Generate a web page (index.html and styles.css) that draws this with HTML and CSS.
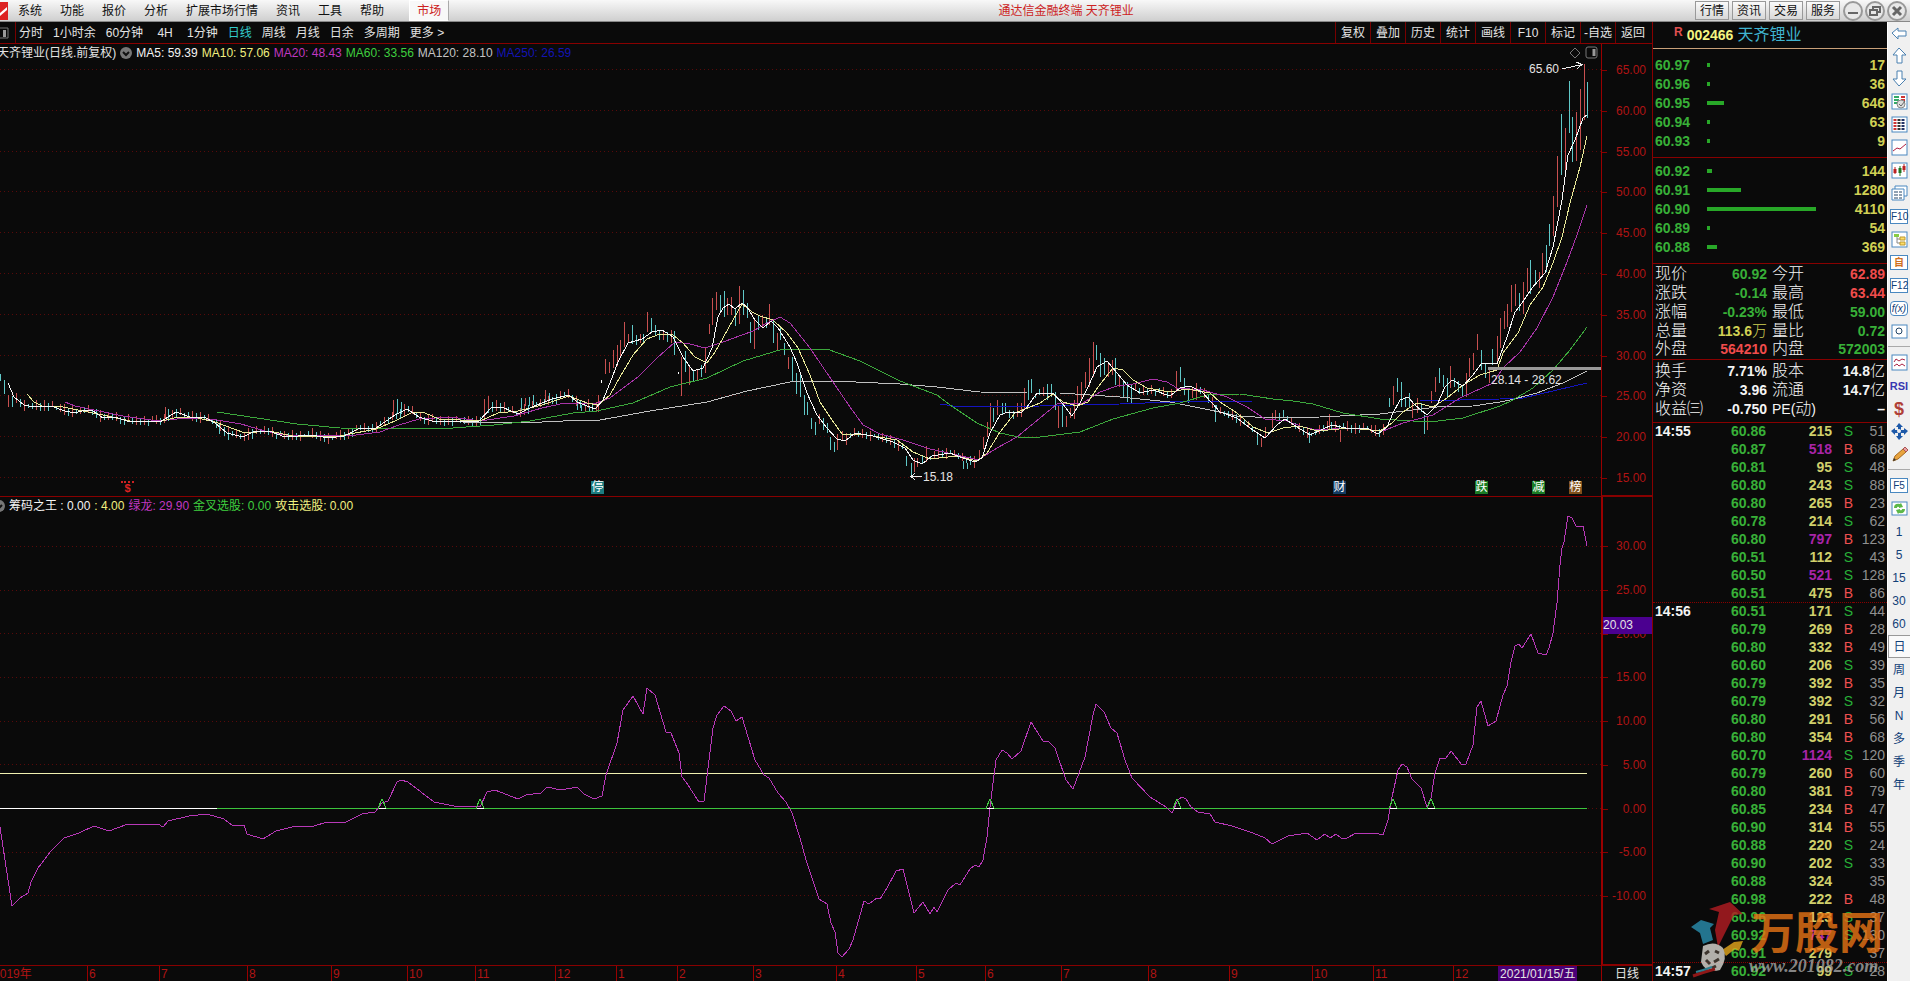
FILE: index.html
```html
<!DOCTYPE html>
<html lang="zh-CN">
<head>
  <meta charset="UTF-8">
  <meta name="viewport" content="width=device-width, initial-scale=1.0">
  <title>通达信金融终端 天齐锂业</title>
  <link rel="stylesheet" href="styles.css">
</head>
<body>
  <div class="app">
    <header class="menu-bar">
      <svg class="app-logo" width="8" height="18" viewBox="0 0 8 18"><rect width="8" height="18" fill="#d22"/><path d="M0 11L7 5V8L0 14Z" fill="#fff"/></svg>
      <nav class="menu">
        <button>系统</button>
        <button>功能</button>
        <button>报价</button>
        <button>分析</button>
        <button>扩展市场行情</button>
        <button>资讯</button>
        <button>工具</button>
        <button>帮助</button>
      </nav>
      <button class="menu-tab">市场</button>
      <div class="title">通达信金融终端 天齐锂业</div>
      <div class="quick">
        <button>行情</button>
        <button>资讯</button>
        <button>交易</button>
        <button>服务</button>
      </div>
      <div class="win-btns">
        <button aria-label="最小化"><svg width="20" height="20" viewBox="0 0 20 20"><circle cx="10" cy="10" r="9"/><path d="M5 12H15" stroke-width="2"/></svg></button>
        <button aria-label="还原"><svg width="20" height="20" viewBox="0 0 20 20"><circle cx="10" cy="10" r="9"/><path d="M8 8V6H15V11H12M5 9H12V14H5Z" stroke-width="2"/></svg></button>
        <button aria-label="关闭"><svg width="20" height="20" viewBox="0 0 20 20"><circle cx="10" cy="10" r="9"/><path d="M6 6L14 14M14 6L6 14" stroke-width="3"/></svg></button>
      </div>
    </header>

    <main class="chart">
      <div class="period-bar">
        <button class="split" aria-label="布局"><svg width="9" height="12" viewBox="0 0 9 12"><path d="M0 1H8V11H0" fill="none" stroke="#777"/><rect x="3" y="3" width="3" height="7" fill="#999"/></svg></button>
        <div class="periods">
          <button>分时</button>
          <button>1小时余</button>
          <button>60分钟</button>
          <button>4H</button>
          <button>1分钟</button>
          <button class="on">日线</button>
          <button>周线</button>
          <button>月线</button>
          <button>日余</button>
          <button>多周期</button>
          <button>更多 &gt;</button>
        </div>
        <div class="tools">
          <button>复权</button>
          <button>叠加</button>
          <button>历史</button>
          <button>统计</button>
          <button>画线</button>
          <button>F10</button>
          <button>标记</button>
          <button>-自选</button>
          <button>返回</button>
        </div>
      </div>

      <section class="pane">
        <svg id="price" class="plot" viewBox="0 44 1601 452" preserveAspectRatio="none"></svg>
        <div class="info">
          <span class="stock-name">天齐锂业(日线.前复权)</span>
          <svg class="drop" width="12" height="12" viewBox="0 0 12 12"><circle cx="6" cy="6" r="6" fill="#777"/><path d="M3 5L6 8L9 5" fill="none" stroke="#111" stroke-width="2"/></svg>
          <span class="c-white">MA5: 59.39</span>
          <span class="c-yellow">MA10: 57.06</span>
          <span class="c-purple">MA20: 48.43</span>
          <span class="c-green">MA60: 33.56</span>
          <span class="c-gray">MA120: 28.10</span>
          <span class="c-blue">MA250: 26.59</span>
        </div>
        <svg class="corner" width="28" height="14" viewBox="0 0 28 14" fill="none" stroke="#777"><path d="M5 2L10 7L5 12L0 7Z"/><rect x="16" y="1" width="11" height="11" rx="2"/><path d="M24 3V10" stroke="#999" stroke-width="3"/></svg>
        <div id="notes"></div>
      </section>
      <div class="axis axis-price">
        <span>65.00</span><span>60.00</span><span>55.00</span><span>50.00</span><span>45.00</span><span>40.00</span><span>35.00</span><span>30.00</span><span>25.00</span><span>20.00</span><span>15.00</span>
      </div>

      <section class="pane pane-sub">
        <svg id="sub" class="plot" viewBox="0 497 1601 468" preserveAspectRatio="none"></svg>
        <div class="info info-sub">
          <svg class="drop" width="12" height="12" viewBox="0 0 12 12"><circle cx="6" cy="6" r="6" fill="#777"/><path d="M3 5L6 8L9 5" fill="none" stroke="#111" stroke-width="2"/></svg>
          <span class="c-white">筹码之王 : 0.00</span>
          <span class="c-yellow">: 4.00</span>
          <span class="c-purple">绿龙: 29.90</span>
          <span class="c-green">金叉选股: 0.00</span>
          <span class="c-yellow">攻击选股: 0.00</span>
        </div>
      </section>
      <div class="axis axis-sub">
        <span>30.00</span><span>25.00</span><span>20.00</span><span>15.00</span><span>10.00</span><span>5.00</span><span>0.00</span><span>-5.00</span><span>-10.00</span>
        <b class="cursor-val">20.03</b>
      </div>

      <div id="dates" class="dates"></div>
      <div class="cycle">日线</div>
    </main>

    <aside class="quote">
      <h1 class="code"><sup>R</sup><span class="num">002466</span><span class="name">天齐锂业</span></h1>
      <table class="depth sell">
        <tr><th>60.97</th><td><i style="width: 2%"></i></td><td>17</td></tr>
        <tr><th>60.96</th><td><i style="width: 2%"></i></td><td>36</td></tr>
        <tr><th>60.95</th><td><i style="width: 14%"></i></td><td>646</td></tr>
        <tr><th>60.94</th><td><i style="width: 2%"></i></td><td>63</td></tr>
        <tr><th>60.93</th><td><i style="width: 2%"></i></td><td>9</td></tr>
      </table>
      <table class="depth buy">
        <tr><th>60.92</th><td><i style="width: 4%"></i></td><td>144</td></tr>
        <tr><th>60.91</th><td><i style="width: 28%"></i></td><td>1280</td></tr>
        <tr><th>60.90</th><td><i style="width: 90%"></i></td><td>4110</td></tr>
        <tr><th>60.89</th><td><i style="width: 2%"></i></td><td>54</td></tr>
        <tr><th>60.88</th><td><i style="width: 8%"></i></td><td>369</td></tr>
      </table>
      <table class="facts">
        <tr><th>现价</th><td class="down">60.92</td><th>今开</th><td class="up">62.89</td></tr>
        <tr><th>涨跌</th><td class="down">-0.14</td><th>最高</th><td class="up">63.44</td></tr>
        <tr><th>涨幅</th><td class="down">-0.23%</td><th>最低</th><td class="down">59.00</td></tr>
        <tr><th>总量</th><td class="vol">113.6<em>万</em></td><th>量比</th><td class="down">0.72</td></tr>
        <tr><th>外盘</th><td class="up">564210</td><th>内盘</th><td class="down">572003</td></tr>
      </table>
      <table class="facts facts-base">
        <tr><th>换手</th><td>7.71%</td><th>股本</th><td>14.8<em>亿</em></td></tr>
        <tr><th>净资</th><td>3.96</td><th>流通</th><td>14.7<em>亿</em></td></tr>
        <tr><th>收益㈢</th><td>-0.750</td><th><b>PE(</b>动<b>)</b></th><td class="dash">–</td></tr>
      </table>
      <table class="ticks"><tbody id="ticks"></tbody></table>
      <div class="mark">
        <svg width="55" height="76" viewBox="0 0 55 76">
          <path d="M3 25L13 18L26 22L22 26L25 38L15 42L12 31Z" fill="#2a8fb0"/>
          <path d="M21 7L42 0L55 12L46 13L30 45L27 28L31 10Z" fill="#b51c22"/>
          <path d="M34 48L46 40L55 39L51 49L47 47L38 54Z" fill="#e5a81c"/>
          <path d="M15 44Q27 38 35 46Q40 56 32 68Q18 72 13 60Z" fill="#dcd9d2"/>
          <path d="M17 52L21 49M27 49L31 51M18 58L22 62M26 60L31 57M24 66L28 64" stroke="#4b4038" stroke-width="3"/>
          <path d="M5 74Q16 70 27 67" fill="none" stroke="#b01c1c" stroke-width="3"/>
          <path d="M8 70Q16 68 24 65" fill="none" stroke="#379ab0" stroke-width="2"/>
        </svg>
        <p><b>万股网</b><i>www.201082.com</i></p>
      </div>
    </aside>

    <nav class="side">
      <button aria-label="后退"><svg viewBox="0 0 17 17"><path class="arr" d="M1 8L7 3V6H15V11H7V14Z"/></svg></button>
      <button aria-label="上"><svg viewBox="0 0 17 17"><path class="arr" d="M8 1L15 8H11V16H6V8H2Z"/></svg></button>
      <button aria-label="下"><svg viewBox="0 0 17 17"><path class="arr" d="M8 16L15 9H11V1H6V9H2Z"/></svg></button>
      <button aria-label="选择"><svg viewBox="0 0 17 17"><rect class="box" x="1" y="1" width="15" height="15"/><path d="M3 4H8M3 7H8M3 10H8" stroke="#3a6" stroke-width="2"/><path d="M10 4H14M10 7H14" stroke="#c33" stroke-width="2"/><circle cx="10" cy="11" r="4" fill="#ddd" stroke="#888"/><path d="M8 11L10 13L14 8" fill="none" stroke="#666"/></svg></button>
      <button aria-label="报价表"><svg viewBox="0 0 17 17"><rect class="box" x="1" y="1" width="15" height="15"/><g stroke-width="3" stroke-dasharray="2 1"><path d="M4 3V14" stroke="#c33"/><path d="M8 3V14" stroke="#333"/><path d="M12 3V14" stroke="#236"/></g></svg></button>
      <button aria-label="分时图"><svg viewBox="0 0 17 17"><rect class="box" x="1" y="1" width="15" height="15"/><path d="M2 12L6 9L9 10L15 5" fill="none" stroke="#b02040"/></svg></button>
      <button aria-label="K线图"><svg viewBox="0 0 17 17"><rect class="box" x="1" y="1" width="15" height="15"/><path d="M4 5V12M13 2V10" stroke="#b22"/><path d="M4 7V11M13 4V8" stroke="#b22" stroke-width="3"/><path d="M9 4V14" stroke="#272"/><path d="M9 6V11" stroke="#272" stroke-width="3"/></svg></button>
      <button aria-label="多窗口"><svg viewBox="0 0 17 17"><path class="box" d="M4 4V1H16V11H13M1 4H13V15H1Z"/><path d="M3 7H7M8 7H11M3 10H7M8 10H11M3 13H7M8 13H11" stroke="#246"/></svg></button>
      <button class="f">F10</button>
      <button aria-label="板块树"><svg viewBox="0 0 17 17"><rect class="box" x="1" y="1" width="15" height="15"/><path d="M6 5V12H9M6 8H9" fill="none" stroke="#888"/><path d="M3 3H8V6H3Z" fill="#8c4"/><path d="M9 6H14V9H9ZM9 11H14V14H9Z" fill="#fd6" stroke="#b93"/></svg></button>
      <button class="f f-self">自</button>
      <button class="f">F12</button>
      <button class="f f-fx">f(x)</button>
      <button aria-label="圆"><svg viewBox="0 0 17 17"><rect class="box" x="1" y="2" width="15" height="13"/><circle cx="8" cy="8" r="3" fill="none" stroke="#246"/></svg></button>
      <hr>
      <button aria-label="指标"><svg viewBox="0 0 17 17"><rect class="box" x="1" y="1" width="15" height="15"/><path d="M3 8L5 5L8 7L11 5L14 6" fill="none" stroke="#a24"/><path d="M3 12L6 10L8 12L11 10L14 12" fill="none" stroke="#a24"/></svg></button>
      <button class="rsi">RSI</button>
      <button class="dollar">$</button>
      <button aria-label="移动"><svg viewBox="0 0 17 17"><path d="M8 0L12 4H10V7H13V5L17 8L13 12V10H10V13H12L8 17L5 13H7V10H4V12L0 8L4 5V7H7V4H5Z" fill="#1c58a8"/><circle cx="8" cy="8" r="2" fill="#f0f0f0"/></svg></button>
      <button aria-label="画线"><svg viewBox="0 0 17 17"><path d="M2 15L4 10L12 3L15 6L7 13Z" fill="#e8a33d" stroke="#a66a20"/><path d="M12 3L14 1L17 4L15 6Z" fill="#e8a0a0" stroke="#a55"/><path d="M2 15L3 12L5 14Z" fill="#333"/></svg></button>
      <hr>
      <button class="f">F5</button>
      <button aria-label="刷新"><svg viewBox="0 0 17 17"><rect class="box" x="1" y="2" width="15" height="13"/><path d="M3 8Q3 3 9 4L10 3L12 7L8 8V7Q6 6 6 8ZM14 9Q14 14 8 13L7 14L5 10L9 9V10Q11 11 11 9Z" fill="#5cb848"/></svg></button>
      <button>1</button>
      <button>5</button>
      <button>15</button>
      <button>30</button>
      <button>60</button>
      <button class="on">日</button>
      <button>周</button>
      <button>月</button>
      <button>N</button>
      <button>多</button>
      <button>季</button>
      <button>年</button>
    </nav>
  </div>
  <script src="chart.js"></script>
</body>
</html>
```
FILE: styles.css
```css
* {
  box-sizing: border-box;
}
body {
  margin: 0;
  background: #0a0a0a;
  font: 12px/16px "Liberation Sans", "Noto Sans CJK SC", sans-serif;
  color: #e4e4e4;
}
button {
  margin: 0;
  padding: 0;
  border: 0;
  background: none;
  font: inherit;
  color: inherit;
  white-space: nowrap;
}
table {
  width: 100%;
  border-collapse: collapse;
}
th, td {
  padding: 0;
}
.app {
  display: grid;
  grid-template-columns: minmax(0, 1fr) 235px 23px;
  grid-template-rows: 22px minmax(0, 1fr);
  height: 100vh;
  overflow: hidden;
}

/* menu */
.menu-bar {
  grid-column: 1 / -1;
  display: flex;
  align-items: center;
  padding-right: 3px;
  background: linear-gradient(#f8f8f8, #cfcfcf);
  border-bottom: 1px solid #888;
  color: #111;
}
.menu {
  display: flex;
  gap: 18px;
  padding: 0 25px 0 10px;
}
.menu-tab {
  height: 21px;
  padding: 0 7px;
  background: #f8f8f8;
  border: 1px solid #fff;
  border-right-color: #aaa;
  color: #c22;
}
.title {
  flex: 1;
  padding-right: 12px;
  text-align: center;
  color: #c22;
}
.quick {
  display: flex;
  gap: 3px;
  padding-right: 3px;
}
.quick button {
  width: 34px;
  height: 19px;
  border: 1px solid #999;
  background: linear-gradient(#fafafa, #d8d8d8);
}
.win-btns {
  display: flex;
  gap: 2px;
}
.win-btns button {
  height: 20px;
}
.win-btns svg {
  fill: none;
  stroke: #666;
}
.win-btns circle {
  fill: #e8e8e8;
  stroke: #999;
  stroke-width: 2;
}

/* chart */
.chart {
  display: grid;
  grid-template-columns: minmax(0, 1fr) 51px;
  grid-template-rows: 22px minmax(0, 453fr) minmax(0, 469fr) 15px;
}
.period-bar {
  grid-column: 1 / -1;
  display: flex;
  align-items: stretch;
  border-bottom: 1px solid #800;
}
.split {
  width: 15px;
  text-align: left;
}
.split svg {
  display: block;
}
.periods {
  flex: 1;
  display: flex;
  gap: 10px;
  padding-left: 3px;
  border-left: 1px solid #700;
}
.periods button {
  min-width: 24px;
}
.periods .on {
  color: #3cc;
}
.tools {
  display: flex;
  padding-right: 2px;
}
.tools button {
  width: 35px;
  border-left: 1px solid #700;
}
.pane {
  position: relative;
  overflow: hidden;
  border-bottom: 1px solid #800;
}
.plot {
  display: block;
  position: absolute;
  width: 100%;
  height: 100%;
  shape-rendering: crispEdges;
}
.info {
  position: relative;
  display: flex;
  align-items: center;
  gap: 4px;
  height: 17px;
}
.info .stock-name {
  margin-left: -3px;
}
.info-sub .drop {
  margin-left: -7px;
}
.c-white { color: #f4f4f4; }
.c-yellow { color: #f0f080; }
.c-purple { color: #c038c0; }
.c-green { color: #3fcf3f; }
.c-gray { color: #c4c4c4; }
.c-blue { color: #1414b4; }
.corner {
  position: absolute;
  top: 2px;
  right: 3px;
}
.note {
  position: absolute;
  transform: translateY(-50%);
}
.badge {
  position: absolute;
  bottom: 2px;
  width: 13px;
  height: 13px;
  margin-left: -6px;
  line-height: 13px;
  text-align: center;
  color: #fff;
}
.b-teal { background: #1d7c80; }
.b-blue { background: #143c64; }
.b-green { background: #1a7c24; }
.b-brown { background: #80501a; }
.b-red {
  border-top: 2px dotted #c22;
  line-height: 11px;
  font-size: 11px;
  font-weight: bold;
  color: #d22;
}
.axis {
  position: relative;
  display: flex;
  flex-direction: column;
  justify-content: space-between;
  padding-right: 6px;
  border-left: 1px solid #900;
  border-bottom: 2px solid #800;
  text-align: right;
  color: #b01414;
}
.axis span {
  position: relative;
}
.axis span::before {
  content: '';
  position: absolute;
  left: 0;
  top: 8px;
  width: 5px;
  height: 1px;
  background: #800;
}
.axis-price {
  padding-top: 18px;
  padding-bottom: 9px;
}
.axis-sub {
  padding-top: 41px;
  padding-bottom: 60px;
  border-left-width: 2px;
}
.cursor-val {
  position: absolute;
  left: 0;
  right: 0;
  top: 120px;
  height: 17px;
  background: #4b0090;
  color: #e4e4e4;
  font-weight: normal;
  text-align: left;
}
.dates {
  position: relative;
  overflow: hidden;
  color: #b01414;
}
.dates span {
  position: absolute;
  padding-left: 1px;
  border-left: 1px solid #900;
}
.dates .today {
  padding: 0 2px;
  border: 0;
  background: #4b0078;
  color: #e4e4e4;
}
.cycle {
  border-left: 1px solid #900;
  text-align: center;
}

/* quote */
.quote {
  position: relative;
  overflow: hidden;
  border-left: 1px solid #800;
  font-size: 14px;
}
.code {
  display: flex;
  gap: 4px;
  height: 27px;
  margin: 0;
  padding-left: 21px;
  border-bottom: 1px solid #c8a078;
  font-size: 14px;
  line-height: 26px;
}
.code sup {
  font-size: 12px;
  line-height: 20px;
  color: #e05050;
}
.code .num {
  color: #f4f480;
}
.code .name {
  font-size: 16px;
  font-weight: normal;
  color: #40b4d0;
}
.depth tr, .facts tr {
  height: 19px;
}
.depth th {
  width: 54px;
  padding-left: 2px;
  text-align: left;
  color: #38b038;
}
.depth td {
  text-align: right;
  font-weight: bold;
  color: #d0d054;
}
.depth td:nth-child(2) {
  width: 121px;
}
.depth td:last-child,
.facts td:last-child,
.ticks td:last-child {
  padding-right: 2px;
}
.depth i {
  display: block;
  height: 4px;
  min-width: 3px;
  background: #28a828;
}
.sell, .buy {
  display: block;
  border-bottom: 1px solid #800;
}
.sell {
  padding: 6px 0 7px;
}
.buy {
  padding: 3px 0 7px;
}
.sell tbody, .buy tbody {
  display: table;
  width: 100%;
  table-layout: fixed;
}
.facts {
  table-layout: fixed;
  border-bottom: 1px solid #800;
}
.facts th {
  width: 54px;
  padding-left: 2px;
  text-align: left;
  font-size: 16px;
  font-weight: 300;
  white-space: nowrap;
  color: #f4f4f4;
}
.facts th b {
  font-size: 14px;
}
.facts td {
  text-align: right;
  font-weight: bold;
  color: #f4f4f4;
}
.facts td:nth-child(2) {
  padding-right: 3px;
}
.facts em {
  font-size: 15px;
  font-style: normal;
  font-weight: 300;
}
.facts .up { color: #f04c4c; }
.facts .down { color: #38b038; }
.facts .vol { color: #d0d054; }
.facts .dash { padding-right: 12px; }
.facts-base {
  margin-top: 2px;
  border-bottom: 0;
}
.ticks {
  margin-top: 3px;
  border-top: 1px solid #800;
  table-layout: fixed;
}
.ticks tr {
  height: 18px;
}
.ticks .minute {
  border-top: 1px dotted #800;
}
.ticks th {
  width: 54px;
  padding-left: 2px;
  text-align: left;
  color: #f4f4f4;
}
.ticks td {
  text-align: right;
  color: #909090;
}
.ticks td:nth-child(2) {
  width: 59px;
  font-weight: bold;
  color: #38b038;
}
.ticks td:nth-child(3) {
  width: 66px;
  font-weight: bold;
  color: #d0d06c;
}
.ticks td:nth-child(4) {
  width: 21px;
}
.ticks td:nth-child(3).big { color: #a824a8; }
.ticks .s { color: #28b038; }
.ticks .b { color: #f05050; }
.mark {
  position: absolute;
  left: 35px;
  right: 0;
  bottom: 3px;
  display: flex;
  opacity: .8;
}
.mark p {
  margin: 10px 0 0;
}
.mark b {
  display: block;
  margin-left: 8px;
  font-size: 44px;
  line-height: 44px;
  color: #e87414;
}
.mark i {
  display: block;
  padding-left: 6px;
  font: italic bold 18px/20px "Liberation Serif", serif;
  color: #a4a4a4;
}
.mark svg {
  flex: none;
}

/* side toolbar */
.side {
  display: flex;
  flex-direction: column;
  background: #f0f0f0;
  border-left: 1px solid #fff;
  color: #124078;
}
.side button {
  flex: none;
  height: 23px;
  text-align: center;
}
.side button:first-child {
  height: 22px;
}
.side svg {
  display: block;
  width: 17px;
  height: 17px;
  margin: 0 auto;
}
.side hr {
  width: 100%;
  margin: 3px 0 4px;
  border: 0;
  border-top: 1px solid #aaa;
}
.side .arr {
  fill: #fff;
  stroke: #4a80b0;
}
.side .box {
  fill: #fff;
  stroke: #4a88c0;
}
.side .f {
  width: 18px;
  height: 15px;
  margin: 4px auto;
  border: 1px solid #4a88c0;
  background: #fff;
  font-size: 10px;
  line-height: 13px;
}
.side .f-self {
  font-weight: bold;
  color: #d07020;
}
.side .f-fx {
  border-radius: 4px;
  font-style: italic;
}
.side .rsi {
  font-size: 11px;
  font-weight: bold;
  color: #3838b0;
}
.side .dollar {
  font-size: 18px;
  font-weight: bold;
  color: #b04038;
}
.side .on {
  border: 1px solid #999;
  border-right: 0;
  background: #fafafa;
}
```
FILE: chart.js
```js
var ma5 = [8,383,14,397,24,405,34,407,51,406,65,411,75,413,85,410,93,411,103,418,115,417,130,422,146,421,160,422,176,412,190,417,206,418,215,423,227,433,243,437,253,432,269,431,285,437,312,435,328,438,344,436,360,428,376,428,395,415,407,409,419,417,435,422,455,421,478,422,492,407,502,407,518,414,532,407,552,399,569,395,577,402,595,409,603,400,610,383,618,362,628,343,642,339,652,332,662,330,673,337,683,357,693,371,703,368,712,348,718,317,723,308,729,304,735,309,742,303,747,307,755,320,763,328,771,321,778,328,790,347,797,363,807,393,817,415,827,428,837,439,845,441,855,433,873,436,893,442,905,448,913,460,922,464,932,456,950,453,960,457,975,462,982,458,990,433,1000,415,1008,412,1022,412,1027,407,1037,393,1053,393,1062,403,1072,416,1080,403,1088,387,1097,367,1107,361,1117,373,1127,385,1140,393,1153,390,1170,396,1180,388,1190,386,1202,392,1212,403,1220,412,1237,418,1250,428,1265,438,1277,425,1285,419,1297,427,1310,435,1332,425,1350,429,1367,428,1378,434,1387,427,1393,413,1400,400,1408,397,1415,405,1427,415,1437,405,1445,387,1452,380,1463,386,1473,375,1482,363,1497,364,1507,337,1515,312,1522,303,1532,288,1545,273,1553,247,1562,200,1568,155,1575,140,1583,118,1587,115];
var ma10 = [27,394,34,402,42,406,63,407,83,411,103,415,130,421,158,422,178,417,198,418,215,422,245,433,269,431,293,436,340,436,376,429,395,421,413,412,425,413,439,419,480,421,498,413,518,411,542,405,569,396,587,403,598,405,610,395,620,377,633,355,647,339,660,334,673,335,683,343,695,357,707,363,715,352,723,338,733,320,742,304,752,312,760,316,773,320,787,333,798,348,810,375,820,402,832,420,842,434,867,435,897,440,913,452,930,459,957,456,977,461,987,453,1000,432,1015,413,1040,403,1053,394,1063,402,1077,406,1088,402,1098,387,1113,368,1123,370,1133,380,1147,388,1170,392,1187,389,1210,393,1220,402,1237,413,1253,427,1268,433,1283,428,1300,426,1317,431,1350,428,1380,431,1392,423,1403,412,1417,403,1433,407,1447,398,1463,385,1480,375,1497,370,1503,353,1518,333,1530,305,1543,287,1553,263,1562,237,1570,203,1580,167,1587,136];
var ma20 = [65,402,75,406,99,411,123,416,158,421,186,418,217,420,241,424,265,431,285,435,348,436,380,432,399,425,419,419,451,417,480,421,514,416,542,408,565,403,597,403,610,398,638,377,657,358,675,342,690,344,705,348,723,342,753,331,767,323,780,317,790,323,810,348,833,382,850,407,863,425,880,434,903,440,930,449,953,454,978,460,997,448,1017,437,1040,418,1057,404,1083,403,1100,392,1117,386,1133,384,1153,379,1167,382,1177,388,1203,390,1227,397,1247,407,1265,419,1287,421,1303,427,1317,430,1347,428,1383,431,1403,423,1433,415,1460,398,1493,383,1503,368,1520,352,1537,328,1553,297,1567,262,1577,235,1587,205];
var ma60 = [217,412,257,418,297,424,340,428,439,429,494,425,530,421,573,413,597,411,633,403,670,387,707,378,743,361,783,349,827,349,860,361,900,381,937,395,953,407,977,423,1000,433,1023,438,1040,437,1080,432,1113,419,1153,408,1180,403,1207,395,1240,394,1273,399,1293,401,1313,404,1343,413,1380,419,1430,422,1463,418,1500,406,1513,400,1533,388,1553,370,1570,350,1587,327];
var ma120 = [463,422,542,422,585,420,600,420,650,411,707,402,747,391,790,382,833,381,900,384,937,387,980,392,1027,393,1060,393,1120,397,1170,402,1210,410,1237,416,1273,418,1320,417,1380,414,1437,407,1473,406,1500,402,1510,400,1537,393,1563,383,1587,371];
var ma250 = [940,404,960,407,1040,406,1120,404,1170,402,1253,401,1420,401,1500,399,1523,398,1557,390,1587,383];
var dragon = [0,827,5,860,12,906,20,898,28,893,31,882,38,868,51,851,64,838,79,833,94,826,109,831,128,824,158,824,163,827,168,821,189,816,207,814,224,819,233,826,244,825,247,834,263,839,276,831,296,826,314,826,327,822,344,823,362,814,375,812,382,803,388,801,397,782,401,780,408,782,434,802,454,806,480,807,487,792,495,790,518,799,526,795,541,793,547,787,561,790,577,787,584,794,594,799,602,796,606,775,617,743,623,710,633,696,643,714,647,688,655,695,666,732,671,733,679,753,682,777,686,782,699,802,704,801,709,760,713,728,717,715,724,706,731,711,736,721,742,717,755,760,764,775,769,778,778,793,786,802,792,813,800,838,806,860,819,899,827,904,831,923,835,932,838,953,842,957,849,949,853,940,864,901,869,904,877,898,880,899,887,888,896,871,903,869,914,913,923,902,930,914,934,907,937,912,948,890,956,883,960,885,970,869,975,865,979,867,983,860,987,837,990,807,996,760,1002,750,1007,753,1012,759,1021,751,1031,722,1043,741,1048,741,1055,748,1066,780,1073,789,1085,757,1093,715,1096,704,1104,712,1111,728,1117,733,1125,760,1132,778,1150,797,1166,807,1172,813,1178,800,1182,797,1186,799,1191,807,1198,812,1210,814,1215,822,1232,826,1253,833,1265,838,1272,844,1288,836,1307,833,1317,840,1325,834,1330,838,1336,834,1341,838,1347,838,1356,833,1375,833,1383,835,1388,820,1392,797,1398,770,1402,764,1407,767,1412,779,1421,788,1427,807,1431,798,1435,773,1440,758,1446,758,1451,751,1462,765,1466,764,1473,745,1477,707,1481,701,1488,726,1496,721,1503,695,1507,686,1511,662,1515,646,1519,644,1522,648,1531,634,1538,653,1546,655,1549,648,1553,633,1557,603,1560,565,1562,548,1564,542,1568,516,1572,518,1576,526,1583,526,1587,546];

// x, high, low, 1 = up / 0 = down
var bars = [0,374,381,0,4,380,394,0,8,395,407,1,12,396,407,0,165,407,418,1,168,409,416,0,219,424,434,0,228,432,440,0,393,400,416,1,397,399,413,0,401,402,414,0,484,399,412,1,488,396,409,1,492,402,412,0,521,398,410,0,525,398,406,1,529,397,406,0,533,395,405,0,545,390,402,1,549,393,400,0,577,399,410,0,581,405,411,0,585,406,411,1,589,406,411,0,598,395,412,1,
605,359,374,1,609,362,373,1,613,350,368,1,617,345,366,1,620,340,357,1,624,322,347,1,628,334,342,1,632,325,344,0,636,335,345,0,640,334,343,1,643,334,342,0,647,312,332,1,651,318,332,0,655,325,335,0,659,330,340,0,663,330,340,1,667,332,342,0,671,330,343,1,674,331,355,0,681,357,396,1,685,351,372,0,689,367,385,1,693,370,381,0,697,370,380,1,701,365,377,0,705,348,373,1,709,324,334,1,712,298,325,1,716,292,310,1,720,295,313,0,724,291,317,0,727,298,315,1,731,297,315,1,735,308,326,0,739,286,324,1,743,290,315,0,747,303,318,0,750,322,343,0,754,320,349,1,758,315,330,0,762,315,328,1,766,317,328,0,769,304,325,1,773,320,343,0,777,333,350,1,780,328,340,0,784,343,355,0,788,357,369,1,792,357,382,0,796,373,394,0,800,375,397,0,804,395,415,0,807,402,415,0,811,418,429,0,815,422,435,0,819,414,424,1,823,418,430,0,827,423,433,0,830,437,450,0,834,442,452,0,837,434,450,1,842,431,441,1,
906,456,466,0,911,463,477,0,914,458,472,1,917,458,467,1,922,455,463,0,926,446,462,1,963,461,469,0,967,463,469,0,979,450,460,1,983,437,449,1,987,422,437,1,990,403,430,1,993,408,422,0,997,400,415,1,1002,403,415,0,1005,403,412,0,1009,410,418,0,1013,411,419,0,1017,403,417,1,1021,403,417,1,1024,388,410,1,1028,380,400,0,1031,379,393,0,1047,384,400,0,1051,384,397,0,1055,392,410,0,1058,405,428,1,1062,403,427,0,1066,416,427,1,1070,408,418,1,1074,400,419,1,1077,386,405,1,1081,382,400,1,1085,372,388,1,1089,358,387,1,1093,342,377,1,1096,345,360,0,1100,353,377,0,1104,358,375,0,1108,363,377,1,1112,360,375,1,1115,358,385,0,1119,377,387,1,1123,382,397,0,1127,382,402,0,1131,385,403,0,
1176,371,392,1,1180,367,382,0,1184,378,395,0,1188,388,403,0,1192,387,398,1,1196,383,400,1,1215,405,422,0,1257,434,445,0,1261,438,447,1,1265,427,438,1,1272,413,428,1,1275,410,420,1,1279,413,420,0,1283,410,418,0,1309,432,443,0,1329,414,430,1,1340,430,442,1,1389,398,407,0,1393,386,405,1,1397,378,392,0,1401,382,407,0,1405,397,407,0,1409,393,407,0,1412,403,418,1,1417,398,413,1,1421,403,412,0,1424,415,434,0,1427,417,430,1,1431,391,403,1,1435,377,392,1,1439,368,383,0,1443,375,387,0,1447,378,397,0,1450,366,388,1,1454,378,387,0,1458,381,392,0,1462,385,397,0,1466,373,397,1,1469,358,377,1,1473,353,370,1,1477,334,350,1,1481,350,370,0,1485,363,378,0,1489,367,383,1,1492,349,365,0,1497,336,363,1,1500,318,348,1,1504,311,329,1,1507,304,327,1,1511,285,312,1,1515,284,306,1,1519,293,311,0,1523,282,314,1,1527,268,292,1,1530,260,294,0,1535,270,285,0,1539,272,288,1,1542,253,275,1,1546,245,272,0,1549,224,246,0,1553,196,236,1,1557,156,207,1,1561,114,175,0,1565,128,174,1,1569,81,133,0,1572,117,162,0,1576,112,161,1,1580,89,150,1,1584,64,120,1,1587,82,118,0];

// quiet stretches, the bars hug the MA5 line
var quiet = [[16,596],[846,903],[930,976],[1035,1044],[1135,1173],[1200,1255],[1287,1386]];

function valueAt(line, x) {
  for (var i = 2; i < line.length; i += 2) {
    if (x <= line[i]) {
      var t = (x - line[i - 2]) / (line[i] - line[i - 2]);
      return line[i - 1] + t * (line[i + 1] - line[i - 1]);
    }
  }
  return line[line.length - 1];
}
function bar(x, y1, y2, up) {
  return '<path d="M' + (x + 0.5) + ' ' + y1 + 'V' + y2 + '" stroke="' + (up ? '#c85050' : '#60c8c8') + '"/>';
}
function line(points, color) {
  return '<polyline points="' + points.join(' ') + '" fill="none" stroke="' + color + '"/>';
}
function grid(from, step, count) {
  var str = '';
  for (var i = 0; i < count; i++) {
    var y = Math.round(from + step * i) + 0.5;
    str += '<path d="M0 ' + y + 'H1601" stroke="#580a0a" stroke-dasharray="1 3"/>';
  }
  return str;
}

function drawPrice() {
  var str = grid(69.2, 40.76, 11);
  for (var q = 0; q < quiet.length; q++) {
    for (var x = quiet[q][0]; x <= quiet[q][1]; x += 4) {
      var n = (x * 37 % 23) / 23;
      var m = (x * 53 % 19) / 19;
      var y = Math.round(valueAt(ma5, x));
      str += bar(x, y - 2 - Math.round(n * 5), y + 1 + Math.round(m * 5), n > 0.5);
    }
  }
  for (var i = 0; i < bars.length; i += 4) {
    str += bar(bars[i], bars[i + 1], bars[i + 2], bars[i + 3]);
  }
  str += '<path d="M601.5 380V383M678.5 372V374" stroke="#fff"/>';
  str += line(ma250, '#1414c0') + line(ma120, '#c0c0c0') + line(ma60, '#3ca83c');
  str += line(ma20, '#a834a8') + line(ma10, '#e8e898') + line(ma5, '#f8f8f8');
  str += '<path d="M1488 368.5H1601" stroke="#999" stroke-width="3"/>';
  str += '<path d="M1562 69L1582 64.5M1576 62L1582 64.5L1577 69M911 476.5H922M915 473L911 476.5L915 480" fill="none" stroke="#eee"/>';
  document.getElementById('price').innerHTML = str;
}

function drawSub() {
  var str = grid(546, 43.65, 9);
  str += '<path d="M0 773.5H1587" stroke="#f0f0b0"/>';
  str += '<path d="M0 808.5H217" stroke="#fff"/><path d="M217 808.5H1587" stroke="#3cc43c"/>';
  str += line(dragon, '#b838b8');
  [382, 480, 990, 1177, 1393, 1431].forEach(function (x) {
    str += '<path d="M' + (x - 4) + ' 808L' + x + ' 799L' + (x + 4) + ' 808" fill="none" stroke="#4c4"/>';
    str += '<path d="M' + (x - 3) + ' 808.5H' + (x + 4) + '" stroke="#fff"/>';
  });
  document.getElementById('sub').innerHTML = str;
}

function left(x) {
  return 'left:' + (x / 16.01).toFixed(2) + '%';
}
function drawNotes() {
  var notes = [[1529, 69, '65.60'], [923, 477, '15.18'], [1491, 380, '28.14 - 28.62']];
  var badges = [[127, 'red', '$'], [597, 'teal', '停'], [1339, 'blue', '财'], [1481, 'green', '跌'], [1538, 'green', '减'], [1575, 'brown', '榜']];
  var str = '';
  notes.forEach(function (n) {
    str += '<span class="note" style="' + left(n[0]) + ';top:' + ((n[1] - 44) / 4.52).toFixed(2) + '%">' + n[2] + '</span>';
  });
  badges.forEach(function (b) {
    str += '<span class="badge b-' + b[1] + '" style="' + left(b[0]) + '">' + b[2] + '</span>';
  });
  document.getElementById('notes').innerHTML = str;
}

function drawDates() {
  var months = [[-9, '2019年'], [87, 6], [159, 7], [247, 8], [331, 9], [407, 10], [475, 11], [555, 12], [616, 1], [677, 2], [753, 3], [836, 4], [916, 5], [985, 6], [1061, 7], [1148, 8], [1229, 9], [1312, 10], [1373, 11], [1453, 12]];
  var str = '';
  months.forEach(function (m) {
    str += '<span style="' + left(m[0]) + '">' + m[1] + '</span>';
  });
  str += '<span class="today" style="' + left(1498) + '">2021/01/15/五</span>';
  document.getElementById('dates').innerHTML = str;
}

function drawTicks() {
  var rows = [
    ['14:55', '60.86', 215, 'S', 51], ['', '60.87', 518, 'B', 68], ['', '60.81', 95, 'S', 48], ['', '60.80', 243, 'S', 88],
    ['', '60.80', 265, 'B', 23], ['', '60.78', 214, 'S', 62], ['', '60.80', 797, 'B', 123], ['', '60.51', 112, 'S', 43],
    ['', '60.50', 521, 'S', 128], ['', '60.51', 475, 'B', 86], ['14:56', '60.51', 171, 'S', 44], ['', '60.79', 269, 'B', 28],
    ['', '60.80', 332, 'B', 49], ['', '60.60', 206, 'S', 39], ['', '60.79', 392, 'B', 35], ['', '60.79', 392, 'S', 32],
    ['', '60.80', 291, 'B', 56], ['', '60.80', 354, 'B', 68], ['', '60.70', 1124, 'S', 120], ['', '60.79', 260, 'B', 60],
    ['', '60.80', 381, 'B', 79], ['', '60.85', 234, 'B', 47], ['', '60.90', 314, 'B', 55], ['', '60.88', 220, 'S', 24],
    ['', '60.90', 202, 'S', 33], ['', '60.88', 324, '', 35], ['', '60.98', 222, 'B', 48], ['', '60.96', 123, 'S', 37],
    ['', '60.92', 747, 'S', 130], ['', '60.91', 279, '', 37], ['14:57', '60.92', 99, 'S', 28]
  ];
  var str = '';
  rows.forEach(function (r, i) {
    str += '<tr' + (r[0] && i ? ' class="minute"' : '') + '><th>' + r[0] + '</th><td>' + r[1] + '</td>' +
      '<td' + (r[2] > 500 ? ' class="big"' : '') + '>' + r[2] + '</td>' +
      '<td class="' + r[3].toLowerCase() + '">' + r[3] + '</td><td>' + r[4] + '</td></tr>';
  });
  document.getElementById('ticks').innerHTML = str;
}

drawPrice();
drawSub();
drawNotes();
drawDates();
drawTicks();
```
